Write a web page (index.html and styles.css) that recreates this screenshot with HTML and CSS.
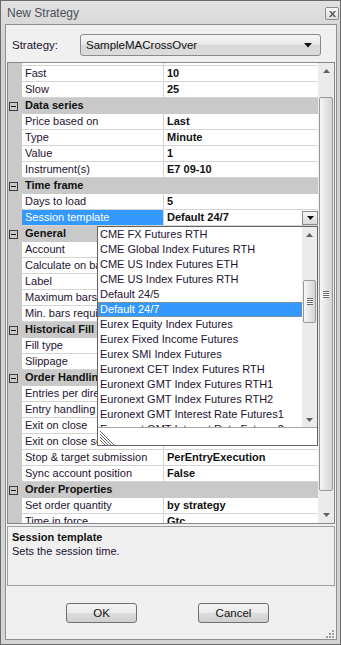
FILE: index.html
```html
<!DOCTYPE html>
<html lang="en">
<head>
  <meta charset="utf-8" />
  <title>New Strategy</title>
  <link rel="stylesheet" href="styles.css">
</head>
<body>
  <div class="window">
    <div class="titlebar">
      <span class="title">New Strategy</span>
      <span class="close">
        <svg width="7" height="6" viewBox="0 0 7 6"><path d="M0 0h2l1.5 2L5 0h2L4.5 3 7 6H5L3.5 4 2 6H0l2.5-3z" fill="#5a5a5a"/></svg>
      </span>
    </div>

    <div class="client">
      <div class="strategy-row">
        <span class="label">Strategy:</span>
        <div class="combo">
          <span>SampleMACrossOver</span>
          <svg width="8" height="5" viewBox="0 0 8 5"><path d="M0 0h8L4 4.5z" fill="#111"/></svg>
        </div>
      </div>

      <div class="grid">
        <div class="rows">
          <div class="rows-inner">
            <!-- row scrolled mostly out of view -->
            <div class="row"><span class="gutter"></span><span class="name"></span><span class="value"></span></div>
            <div class="row"><span class="gutter"></span><span class="name">Fast</span><span class="value">10</span></div>
            <div class="row"><span class="gutter"></span><span class="name">Slow</span><span class="value">25</span></div>
            <div class="row cat"><span class="gutter"><i class="toggle"></i></span><span class="cat-name">Data series</span></div>
            <div class="row"><span class="gutter"></span><span class="name">Price based on</span><span class="value">Last</span></div>
            <div class="row"><span class="gutter"></span><span class="name">Type</span><span class="value">Minute</span></div>
            <div class="row"><span class="gutter"></span><span class="name">Value</span><span class="value">1</span></div>
            <div class="row"><span class="gutter"></span><span class="name">Instrument(s)</span><span class="value">E7 09-10</span></div>
            <div class="row cat"><span class="gutter"><i class="toggle"></i></span><span class="cat-name">Time frame</span></div>
            <div class="row"><span class="gutter"></span><span class="name">Days to load</span><span class="value">5</span></div>
            <div class="row selected">
              <span class="gutter"></span><span class="name">Session template</span>
              <span class="value">Default 24/7
                <span class="drop-btn"><svg width="7" height="4" viewBox="0 0 7 4"><path d="M0 0h7L3.5 4z" fill="#111"/></svg></span>
              </span>
            </div>
            <!-- values below are hidden by the open list -->
            <div class="row cat"><span class="gutter"><i class="toggle"></i></span><span class="cat-name">General</span></div>
            <div class="row"><span class="gutter"></span><span class="name">Account</span><span class="value"></span></div>
            <div class="row"><span class="gutter"></span><span class="name">Calculate on bar close</span><span class="value"></span></div>
            <div class="row"><span class="gutter"></span><span class="name">Label</span><span class="value"></span></div>
            <div class="row"><span class="gutter"></span><span class="name">Maximum bars look back</span><span class="value"></span></div>
            <div class="row"><span class="gutter"></span><span class="name">Min. bars required</span><span class="value"></span></div>
            <div class="row cat"><span class="gutter"><i class="toggle"></i></span><span class="cat-name">Historical Fill Processing</span></div>
            <div class="row"><span class="gutter"></span><span class="name">Fill type</span><span class="value"></span></div>
            <div class="row"><span class="gutter"></span><span class="name">Slippage</span><span class="value"></span></div>
            <div class="row cat"><span class="gutter"><i class="toggle"></i></span><span class="cat-name">Order Handling</span></div>
            <div class="row"><span class="gutter"></span><span class="name">Entries per direction</span><span class="value"></span></div>
            <div class="row"><span class="gutter"></span><span class="name">Entry handling</span><span class="value"></span></div>
            <div class="row"><span class="gutter"></span><span class="name">Exit on close</span><span class="value"></span></div>
            <div class="row"><span class="gutter"></span><span class="name">Exit on close seconds</span><span class="value"></span></div>
            <div class="row"><span class="gutter"></span><span class="name">Stop &amp; target submission</span><span class="value">PerEntryExecution</span></div>
            <div class="row"><span class="gutter"></span><span class="name">Sync account position</span><span class="value">False</span></div>
            <div class="row cat"><span class="gutter"><i class="toggle"></i></span><span class="cat-name">Order Properties</span></div>
            <div class="row"><span class="gutter"></span><span class="name">Set order quantity</span><span class="value">by strategy</span></div>
            <div class="row"><span class="gutter"></span><span class="name">Time in force</span><span class="value">Gtc</span></div>
          </div>
        </div>

        <div class="vscroll">
          <span class="sb-btn"><svg width="7" height="4" viewBox="0 0 7 4"><path d="M0 4h7L3.5 0z" fill="#606060"/></svg></span>
          <div class="sb-track">
            <div class="thumb main-thumb"><i class="grip"></i></div>
          </div>
          <span class="sb-btn"><svg width="7" height="4" viewBox="0 0 7 4"><path d="M0 0h7L3.5 4z" fill="#606060"/></svg></span>
        </div>
      </div>

      <div class="desc">
        <div class="desc-title">Session template</div>
        <div>Sets the session time.</div>
      </div>

      <div class="buttons">
        <button class="btn">OK</button>
        <button class="btn">Cancel</button>
      </div>
    </div>

    <div class="dropdown">
      <div class="drop-list">
        <div class="items">
          <div class="item">CME FX Futures RTH</div>
          <div class="item">CME Global Index Futures RTH</div>
          <div class="item">CME US Index Futures ETH</div>
          <div class="item">CME US Index Futures RTH</div>
          <div class="item">Default 24/5</div>
          <div class="item active">Default 24/7</div>
          <div class="item">Eurex Equity Index Futures</div>
          <div class="item">Eurex Fixed Income Futures</div>
          <div class="item">Eurex SMI Index Futures</div>
          <div class="item">Euronext CET Index Futures RTH</div>
          <div class="item">Euronext GMT Index Futures RTH1</div>
          <div class="item">Euronext GMT Index Futures RTH2</div>
          <div class="item">Euronext GMT Interest Rate Futures1</div>
          <div class="item">Euronext GMT Interest Rate Futures2</div>
        </div>
        <div class="vscroll small">
          <span class="sb-btn"><svg width="7" height="4" viewBox="0 0 7 4"><path d="M0 4h7L3.5 0z" fill="#606060"/></svg></span>
          <div class="sb-track">
            <div class="thumb list-thumb"><i class="grip"></i></div>
          </div>
          <span class="sb-btn"><svg width="7" height="4" viewBox="0 0 7 4"><path d="M0 0h7L3.5 4z" fill="#606060"/></svg></span>
        </div>
      </div>
      <div class="drop-foot">
        <svg width="15" height="15" viewBox="0 0 15 15">
          <path d="M0 1L14 15M0 4L11 15M0 7L8 15M0 10L5 15" stroke="#707070" stroke-width="1"/>
        </svg>
      </div>
    </div>

    <svg class="size-grip" width="8" height="8" viewBox="0 0 8 8">
      <rect x="6" y="0" width="2" height="2" fill="#a0a0a0"/>
      <rect x="3" y="3" width="2" height="2" fill="#a0a0a0"/>
      <rect x="6" y="3" width="2" height="2" fill="#a0a0a0"/>
      <rect x="0" y="6" width="2" height="2" fill="#a0a0a0"/>
      <rect x="3" y="6" width="2" height="2" fill="#a0a0a0"/>
      <rect x="6" y="6" width="2" height="2" fill="#a0a0a0"/>
    </svg>
  </div>
</body>
</html>
```

FILE: styles.css
```css
* {
  margin: 0;
  padding: 0;
  box-sizing: border-box;
}

body {
  font-family: 'Liberation Sans', Arial, sans-serif;
  font-size: 11px;
  color: #1e1230;
  background: #fff;
}

.window {
  position: relative;
  display: flex;
  flex-direction: column;
  width: 341px;
  height: 645px;
  border: 1px solid #6b6b6b;
  background: linear-gradient(#e2e2e2, #d2d2d2 40px, #d4d4d4);
}

.titlebar {
  display: flex;
  align-items: center;
  height: 23px;
  padding: 0 1px 0 6px;
}

.title {
  flex: 1;
  font-size: 12px;
  color: #4a4f58;
}

.close {
  display: flex;
  align-items: center;
  justify-content: center;
  width: 14px;
  height: 13px;
  margin-top: 2px;
  border: 1px solid #8a8a8a;
  border-radius: 2px;
  background: linear-gradient(#fafafa, #dcdcdc);
}

.client {
  display: flex;
  flex-direction: column;
  flex: 1;
  margin: 0 3px 4px 4px;
  border: 1px solid #8e8f8f;
  background: #f0f0f0;
}

.strategy-row {
  display: flex;
  height: 37px;
  padding: 9px 0 0 6px;
}

.label {
  width: 68px;
  line-height: 22px;
  font-size: 11.5px;
}

.combo {
  display: flex;
  align-items: center;
  justify-content: space-between;
  width: 241px;
  height: 22px;
  padding: 0 8px 0 5px;
  border: 1px solid #8a8a8a;
  border-radius: 3px;
  background: linear-gradient(#f6f6f6, #e8e8e8 50%, #d8d8d8 51%, #dcdcdc);
  font-size: 11.5px;
  color: #111;
}

/* property grid */

.grid {
  display: flex;
  height: 462px;
  margin: 0 1px;
  border: 1px solid #828790;
  background: #fff;
  overflow: hidden;
}

.rows {
  width: 310px;
  overflow: hidden;
}

.rows-inner {
  margin-top: -13px;
}

.row {
  display: flex;
  height: 16px;
  line-height: 15px;
}

.gutter {
  display: flex;
  align-items: center;
  width: 14px;
  background: #c9c9c9;
}

.name {
  width: 142px;
  padding-left: 3px;
  border-right: 1px solid #d4d4d4;
  border-bottom: 1px solid #d4d4d4;
  white-space: nowrap;
  overflow: hidden;
}

.value {
  position: relative;
  flex: 1;
  padding-left: 3px;
  border-bottom: 1px solid #d4d4d4;
  font-weight: bold;
  color: #111;
  white-space: nowrap;
}

.cat {
  background: #c9c9c9;
}

.cat-name {
  flex: 1;
  padding-left: 3px;
  font-weight: bold;
  color: #111;
}

.toggle {
  position: relative;
  display: block;
  width: 9px;
  height: 9px;
  margin-left: 1px;
  border: 1px solid #3c3c3c;
}

.toggle::after {
  content: '';
  position: absolute;
  left: 1px;
  top: 3px;
  width: 5px;
  height: 1px;
  background: #111;
}

.selected .name {
  background: #3399ff;
  color: #fff;
}

.drop-btn {
  position: absolute;
  right: 0;
  top: 1px;
  display: flex;
  align-items: center;
  justify-content: center;
  width: 16px;
  height: 14px;
  border: 1px solid #8a8a8a;
  background: linear-gradient(#f8f8f8, #dadada);
}

/* scroll bars */

.vscroll {
  display: flex;
  flex-direction: column;
  width: 16px;
  background: #ebebeb;
}

.vscroll.small {
  width: 15px;
}

.sb-btn {
  display: flex;
  align-items: center;
  justify-content: center;
  height: 16px;
}

.small .sb-btn {
  height: 15px;
}

.sb-track {
  flex: 1;
}

.thumb {
  display: flex;
  align-items: center;
  justify-content: center;
  margin: 0 1px;
  border: 1px solid #9a9a9a;
  border-radius: 2px;
  background: linear-gradient(90deg, #f6f6f6, #e2e2e2 60%, #d4d4d4);
}

.main-thumb {
  height: 394px;
  margin-top: 18px;
}

.list-thumb {
  height: 43px;
  margin-top: 38px;
}

.grip {
  width: 6px;
  height: 7px;
  background: repeating-linear-gradient(#666 0 1px, #fff 1px 2px);
}

/* description and buttons */

.desc {
  height: 60px;
  margin: 2px 1px 0;
  padding: 3px 4px;
  border: 1px solid #a0a0a0;
  line-height: 14px;
}

.desc-title {
  font-weight: bold;
  color: #111;
}

.buttons {
  display: flex;
  gap: 61px;
  margin-top: 17px;
  padding-left: 60px;
}

.btn {
  width: 71px;
  height: 20px;
  border: 1px solid #707070;
  border-radius: 3px;
  background: linear-gradient(#f3f3f3, #ebebeb 50%, #dddddd 51%, #cfcfcf);
  font-family: inherit;
  font-size: 11.5px;
  color: #111;
}

/* session template popup */

.dropdown {
  position: absolute;
  left: 96px;
  top: 225px;
  width: 221px;
  height: 220px;
  border: 1px solid #646464;
  background: #fff;
}

.drop-list {
  display: flex;
  height: 200px;
}

.items {
  flex: 1;
  overflow: hidden;
}

.item {
  height: 15px;
  padding-left: 2px;
  line-height: 15px;
  white-space: nowrap;
}

.item.active {
  background: #3399ff;
  color: #fff;
  outline: 1px dotted #c08a40;
  outline-offset: -1px;
}

.drop-foot {
  height: 18px;
  padding: 2px 0 0 2px;
  border-top: 1px solid #a8a8a8;
}

.size-grip {
  position: absolute;
  right: 6px;
  bottom: 6px;
}
```
